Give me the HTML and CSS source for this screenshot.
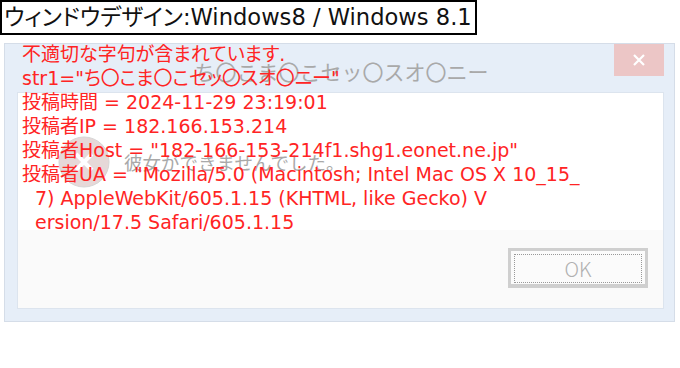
FILE: index.html
```html
<!DOCTYPE html>
<html lang="ja">
<head>
    <meta charset="UTF-8">
    <title>ウィンドウデザイン</title>
    <link rel="stylesheet" href="styles.css">
</head>
<body>
    <div class="caption">ウィンドウデザイン:Windows8 / Windows 8.1</div>

    <div class="dialog-wrap">
        <div class="dialog">
            <div class="titlebar">
                <span class="title">ち〇こま〇こセッ〇スオ〇ニー</span>
                <span class="close">
                    <svg width="14" height="14" viewBox="0 0 14 14">
                        <path d="M2 2 L12 12 M12 2 L2 12" stroke="#fff" stroke-width="2.2"/>
                    </svg>
                </span>
            </div>
            <div class="panel">
                <div class="message">
                    <svg class="icon" width="52" height="52" viewBox="0 0 52 52">
                        <circle cx="26" cy="26" r="25" fill="#e6d8d8" stroke="#d6d6d6"/>
                        <path d="M18 18 L34 34 M34 18 L18 34" stroke="#fff" stroke-width="4"/>
                    </svg>
                    <span class="msg-text">彼女ができませんでした。</span>
                </div>
                <div class="buttons">
                    <button class="ok"><span class="focus">OK</span></button>
                </div>
            </div>
        </div>

        <!-- overlay: error text printed over the dialog -->
        <div class="overlay">
            <div class="line">不適切な字句が含まれています.</div>
            <div class="line">str1="ち〇こま〇こセッ〇スオ〇ニー"</div>
            <div class="line">投稿時間 = 2024-11-29 23:19:01</div>
            <div class="line">投稿者IP = 182.166.153.214</div>
            <div class="line">投稿者Host = "182-166-153-214f1.shg1.eonet.ne.jp"</div>
            <div class="line">投稿者UA = "Mozilla/5.0 (Macintosh; Intel Mac OS X 10_15_</div>
            <div class="line wrap">7) AppleWebKit/605.1.15 (KHTML, like Gecko) V</div>
            <div class="line wrap">ersion/17.5 Safari/605.1.15</div>
        </div>
    </div>
</body>
</html>
```

FILE: styles.css
```css
body {
    margin: 0;
    background-color: #fff;
    font-family: "DejaVu Sans", "Noto Sans CJK JP", sans-serif;
}
.caption {
    display: inline-block;
    height: 31px;
    line-height: 31px;
    padding: 0 3px 0 2px;
    border: 2px solid #000;
    font-size: 22.6px;
    font-feature-settings: "palt";
    color: #111;
    white-space: nowrap;
}
.dialog-wrap {
    position: relative;
    margin: 8px 0 0 4px;
    width: 671px;
}
.dialog {
    background-color: #e6eef8;
    border: 1px solid #d5dde8;
    padding: 0 10px 12px 12px;
}
.titlebar {
    display: flex;
    align-items: flex-start;
    height: 48px;
}
.title {
    flex: 1;
    text-align: center;
    padding: 12px 0 0 52px;
    font-size: 21px;
    color: #a9a9a9;
}
.close {
    display: flex;
    align-items: center;
    justify-content: center;
    width: 50px;
    height: 32px;
    background-color: #ecc6c6;
}
.panel {
    border: 1px solid #dce4ee;
    background-color: #fafafa;
}
.message {
    display: flex;
    align-items: center;
    height: 137px;
    padding-left: 40px;
    background-color: #fff;
}
.icon {
    margin-right: 14px;
}
.msg-text {
    font-size: 18.5px;
    color: #a9a9a9;
}
.buttons {
    display: flex;
    justify-content: flex-end;
    height: 78px;
    padding: 18px 15px 0 0;
    box-sizing: border-box;
}
.ok {
    width: 140px;
    height: 40px;
    padding: 3px;
    background-color: #fbfbfb;
    border: 3px solid #cfcfcf;
    border-bottom-width: 4px;
}
.focus {
    display: flex;
    align-items: center;
    justify-content: center;
    height: 100%;
    border: 1px dotted #999;
    font-family: "Noto Sans CJK JP", sans-serif;
    font-weight: 300;
    font-size: 20px;
    color: #b0b0b0;
}
.overlay {
    position: absolute;
    left: 18px;
    top: -1px;
    font-size: 19px;
    line-height: 24px;
    font-feature-settings: "palt";
    color: #ff2424;
    white-space: nowrap;
}
.wrap {
    padding-left: 13px;
}
```
